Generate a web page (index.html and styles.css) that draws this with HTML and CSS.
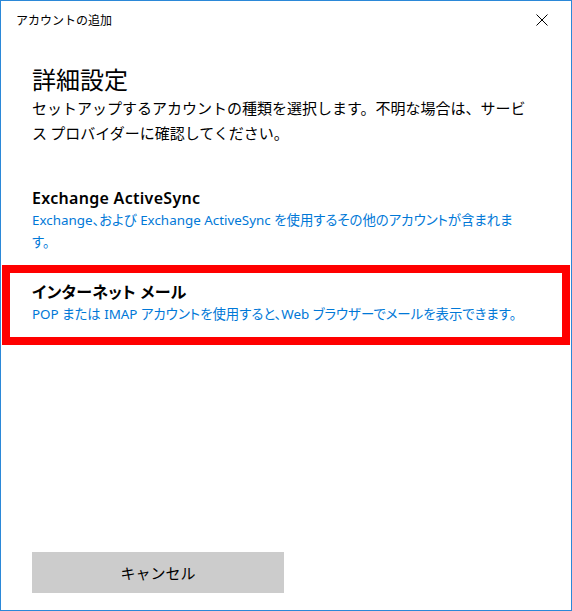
FILE: index.html
```html
<!DOCTYPE html>
<html lang="ja">
<head>
<meta charset="utf-8">
<link rel="stylesheet" href="styles.css">
</head>
<body>
<div class="window">
  <div class="titlebar">
    <span class="title">アカウントの追加</span>
    <span class="close"><svg width="12" height="12" viewBox="0 0 12 12"><path d="M0.5 0.5L11.5 11.5M11.5 0.5L0.5 11.5" stroke="#000" stroke-width="1" fill="none"/></svg></span>
  </div>
  <div class="content">
    <h1 class="heading">詳細設定</h1>
    <p class="desc">セットアップするアカウントの種類を選択します。不明な場合は、サービス プロバイダーに確認してください。</p>
  </div>
  <div class="list">
    <div class="item">
      <div class="item-title">Exchange ActiveSync</div>
      <div class="item-desc">Exchange、および Exchange ActiveSync を使用するその他のアカウントが含まれます。</div>
    </div>
    <div class="item selected">
      <div class="item-title">インターネット メール</div>
      <div class="item-desc">POP または IMAP アカウントを使用すると、Web ブラウザーでメールを表示できます。</div>
    </div>
  </div>
  <div class="footer">
    <button class="btn">キャンセル</button>
  </div>
</div>
</body>
</html>
```
FILE: styles.css
```css
html, body {
  margin: 0;
  padding: 0;
  background: #fff;
}
body {
  font-family: "Noto Sans", "Noto Sans CJK JP", sans-serif;
  color: #000;
}
.window {
  width: 572px;
  height: 611px;
  box-sizing: border-box;
  border: 1px solid #2b88d8;
  background: #fff;
  display: flex;
  flex-direction: column;
}
.titlebar {
  height: 32px;
  display: flex;
  align-items: center;
  justify-content: space-between;
  padding: 0 23px 0 15px;
  font-family: "Noto Sans CJK JP", sans-serif;
  font-size: 12px;
}
.title {
  line-height: 16px;
  margin-top: 6px;
}
.close {
  display: flex;
  margin-top: 6px;
}
.content {
  padding: 30px 31px 0 31px;
}
.heading {
  margin: 0;
  font-family: "Noto Sans CJK JP", sans-serif;
  font-weight: 400;
  font-size: 24px;
  line-height: 32px;
}
.desc {
  margin: 0;
  font-family: "Noto Sans CJK JP", sans-serif;
  font-size: 15px;
  line-height: 25px;
  width: 508px;
}
.list {
  margin-top: 26px;
  display: flex;
  flex-direction: column;
}
.item {
  margin: 0 1px;
  border: 8px solid transparent;
  padding: 8px 22px 4px 22px;
}
.item.selected {
  border-color: #ff0000;
  padding-bottom: 12px;
}
.item-title {
  font-size: 16px;
  font-weight: 600;
  line-height: 22px;
  letter-spacing: 0.3px;
  font-feature-settings: "palt";
}
.item-desc {
  max-width: 490px;
  font-size: 13.4px;
  line-height: 22px;
  color: #0078d7;
  font-feature-settings: "palt";
}
.footer {
  margin-top: auto;
  padding: 0 31px 17px 31px;
}
.btn {
  width: 252px;
  height: 41px;
  border: none;
  background: #cccccc;
  font-family: "Noto Sans CJK JP", sans-serif;
  font-size: 15px;
  color: #000;
  padding: 0;
}
```
